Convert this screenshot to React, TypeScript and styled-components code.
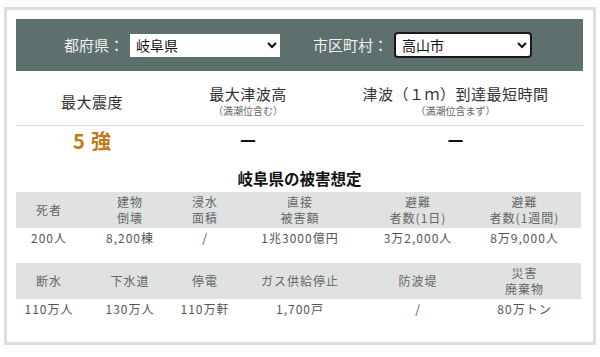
import React, { useState } from "react";
import styled, { createGlobalStyle } from "styled-components";

const GlobalStyle = createGlobalStyle`
  html, body {
    margin: 0;
    padding: 0;
    background: #ffffff;
  }
  body {
    font-family: "Noto Sans CJK JP", "Noto Sans", sans-serif;
    color: #333;
  }
`;

const summary = [
  { title: "最大震度", note: "", value: "5強", accent: true },
  { title: "最大津波高", note: "（満潮位含む）", value: "－", accent: false },
  { title: "津波（１ｍ）到達最短時間", note: "（満潮位含まず）", value: "－", accent: false },
];

const damage1 = [
  { label: ["死者"], value: "200人" },
  { label: ["建物", "倒壊"], value: "8,200棟" },
  { label: ["浸水", "面積"], value: "/" },
  { label: ["直接", "被害額"], value: "1兆3000億円" },
  { label: ["避難", "者数(1日)"], value: "3万2,000人" },
  { label: ["避難", "者数(1週間)"], value: "8万9,000人" },
];

const damage2 = [
  { label: ["断水"], value: "110万人" },
  { label: ["下水道"], value: "130万人" },
  { label: ["停電"], value: "110万軒" },
  { label: ["ガス供給停止"], value: "1,700戸" },
  { label: ["防波堤"], value: "/" },
  { label: ["災害", "廃棄物"], value: "80万トン" },
];

const App = () => {
  const [pref, setPref] = useState("岐阜県");
  const [city, setCity] = useState("高山市");

  return (
    <>
      <GlobalStyle />
      <Page>
        <Card>
          <SearchBar>
            <Field>
              <FieldLabel>都府県：</FieldLabel>
              <Select value={pref} onChange={(e) => setPref(e.target.value)}>
                <option>岐阜県</option>
                <option>愛知県</option>
                <option>三重県</option>
              </Select>
            </Field>
            <Field>
              <FieldLabel>市区町村：</FieldLabel>
              <Select $focused value={city} onChange={(e) => setCity(e.target.value)}>
                <option>高山市</option>
                <option>岐阜市</option>
                <option>大垣市</option>
              </Select>
            </Field>
          </SearchBar>

          <Summary>
            {summary.map((s) => (
              <SummaryHead key={s.title}>
                <HeadTitle>{s.title}</HeadTitle>
                {s.note && <HeadNote>{s.note}</HeadNote>}
              </SummaryHead>
            ))}
            {summary.map((s) => (
              <SummaryValue key={s.title} $accent={s.accent}>
                {s.value}
              </SummaryValue>
            ))}
          </Summary>

          <SectionTitle>岐阜県の被害想定</SectionTitle>

          <DamageTable>
            {damage1.map((d) => (
              <DamageHead key={d.value + d.label.join("")}>
                {d.label.map((l) => (
                  <span key={l}>{l}</span>
                ))}
              </DamageHead>
            ))}
            {damage1.map((d) => (
              <DamageValue key={d.label.join("")}>{d.value}</DamageValue>
            ))}
          </DamageTable>

          <DamageTable>
            {damage2.map((d) => (
              <DamageHead key={d.value + d.label.join("")}>
                {d.label.map((l) => (
                  <span key={l}>{l}</span>
                ))}
              </DamageHead>
            ))}
            {damage2.map((d) => (
              <DamageValue key={d.label.join("")}>{d.value}</DamageValue>
            ))}
          </DamageTable>
        </Card>
      </Page>
    </>
  );
};

export default App;

const Page = styled.div`
  width: 600px;
  height: 357px;
  padding: 7px 4px 0 4px;
  box-sizing: border-box;
`;

const Card = styled.div`
  width: 592px;
  height: 338px;
  box-sizing: border-box;
  border: 3px solid #dedede;
  padding: 9px 10px 0 9px;
`;

const SearchBar = styled.div`
  height: 52px;
  background: #5e706d;
  display: flex;
  align-items: center;
  padding-left: 48px;
  gap: 33px;
`;

const Field = styled.div`
  display: flex;
  align-items: center;
  gap: 6px;
`;

const FieldLabel = styled.span`
  flex-shrink: 0;
  color: #f0f0f0;
  font-size: 15px;
  line-height: 20px;
`;

const Select = styled.select<{ $focused?: boolean }>`
  flex-shrink: 0;
  box-sizing: border-box;
  width: ${(p) => (p.$focused ? "138px" : "150px")};
  height: ${(p) => (p.$focused ? "26px" : "23px")};
  font-family: "Noto Sans CJK JP", sans-serif;
  font-size: 14px;
  color: #111;
  background: #fff;
  padding: 0 2px;
  border: ${(p) => (p.$focused ? "2px solid #1a1a1a" : "none")};
  border-radius: ${(p) => (p.$focused ? "4px" : "0")};
  outline: none;
`;

const Summary = styled.div`
  display: grid;
  grid-template-columns: 152px 160px 1fr;
  margin-top: 8px;
`;

const SummaryHead = styled.div`
  height: 46px;
  display: flex;
  flex-direction: column;
  align-items: center;
  justify-content: center;
  border-bottom: 1px solid #dcdcdc;
  color: #333;
`;

const HeadTitle = styled.span`
  font-size: 15px;
  line-height: 18px;
  letter-spacing: 0.5px;
`;

const HeadNote = styled.span`
  font-size: 10px;
  line-height: 16px;
  color: #666;
`;

const SummaryValue = styled.div<{ $accent: boolean }>`
  text-align: center;
  font-size: 20px;
  font-weight: 700;
  line-height: 30px;
  letter-spacing: ${(p) => (p.$accent ? "6px" : "0")};
  padding-left: ${(p) => (p.$accent ? "6px" : "0")};
  color: ${(p) => (p.$accent ? "#c27a19" : "#111")};
`;

const SectionTitle = styled.h3`
  margin: 12px 0 4px 0;
  text-align: center;
  font-size: 15.5px;
  font-weight: 700;
  line-height: 20px;
  color: #111;
`;

const DamageTable = styled.div`
  display: grid;
  grid-template-columns: 66px 96px 54px 136px 100px 113px;
  margin-bottom: 15px;
`;

const DamageHead = styled.div`
  background: #dfe2e1;
  height: 36px;
  display: flex;
  flex-direction: column;
  align-items: center;
  justify-content: center;
  font-size: 12px;
  line-height: 16px;
  letter-spacing: 1px;
  color: #666;
`;

const DamageValue = styled.div`
  text-align: center;
  font-size: 12px;
  line-height: 20px;
  letter-spacing: 1px;
  color: #555;
`;
